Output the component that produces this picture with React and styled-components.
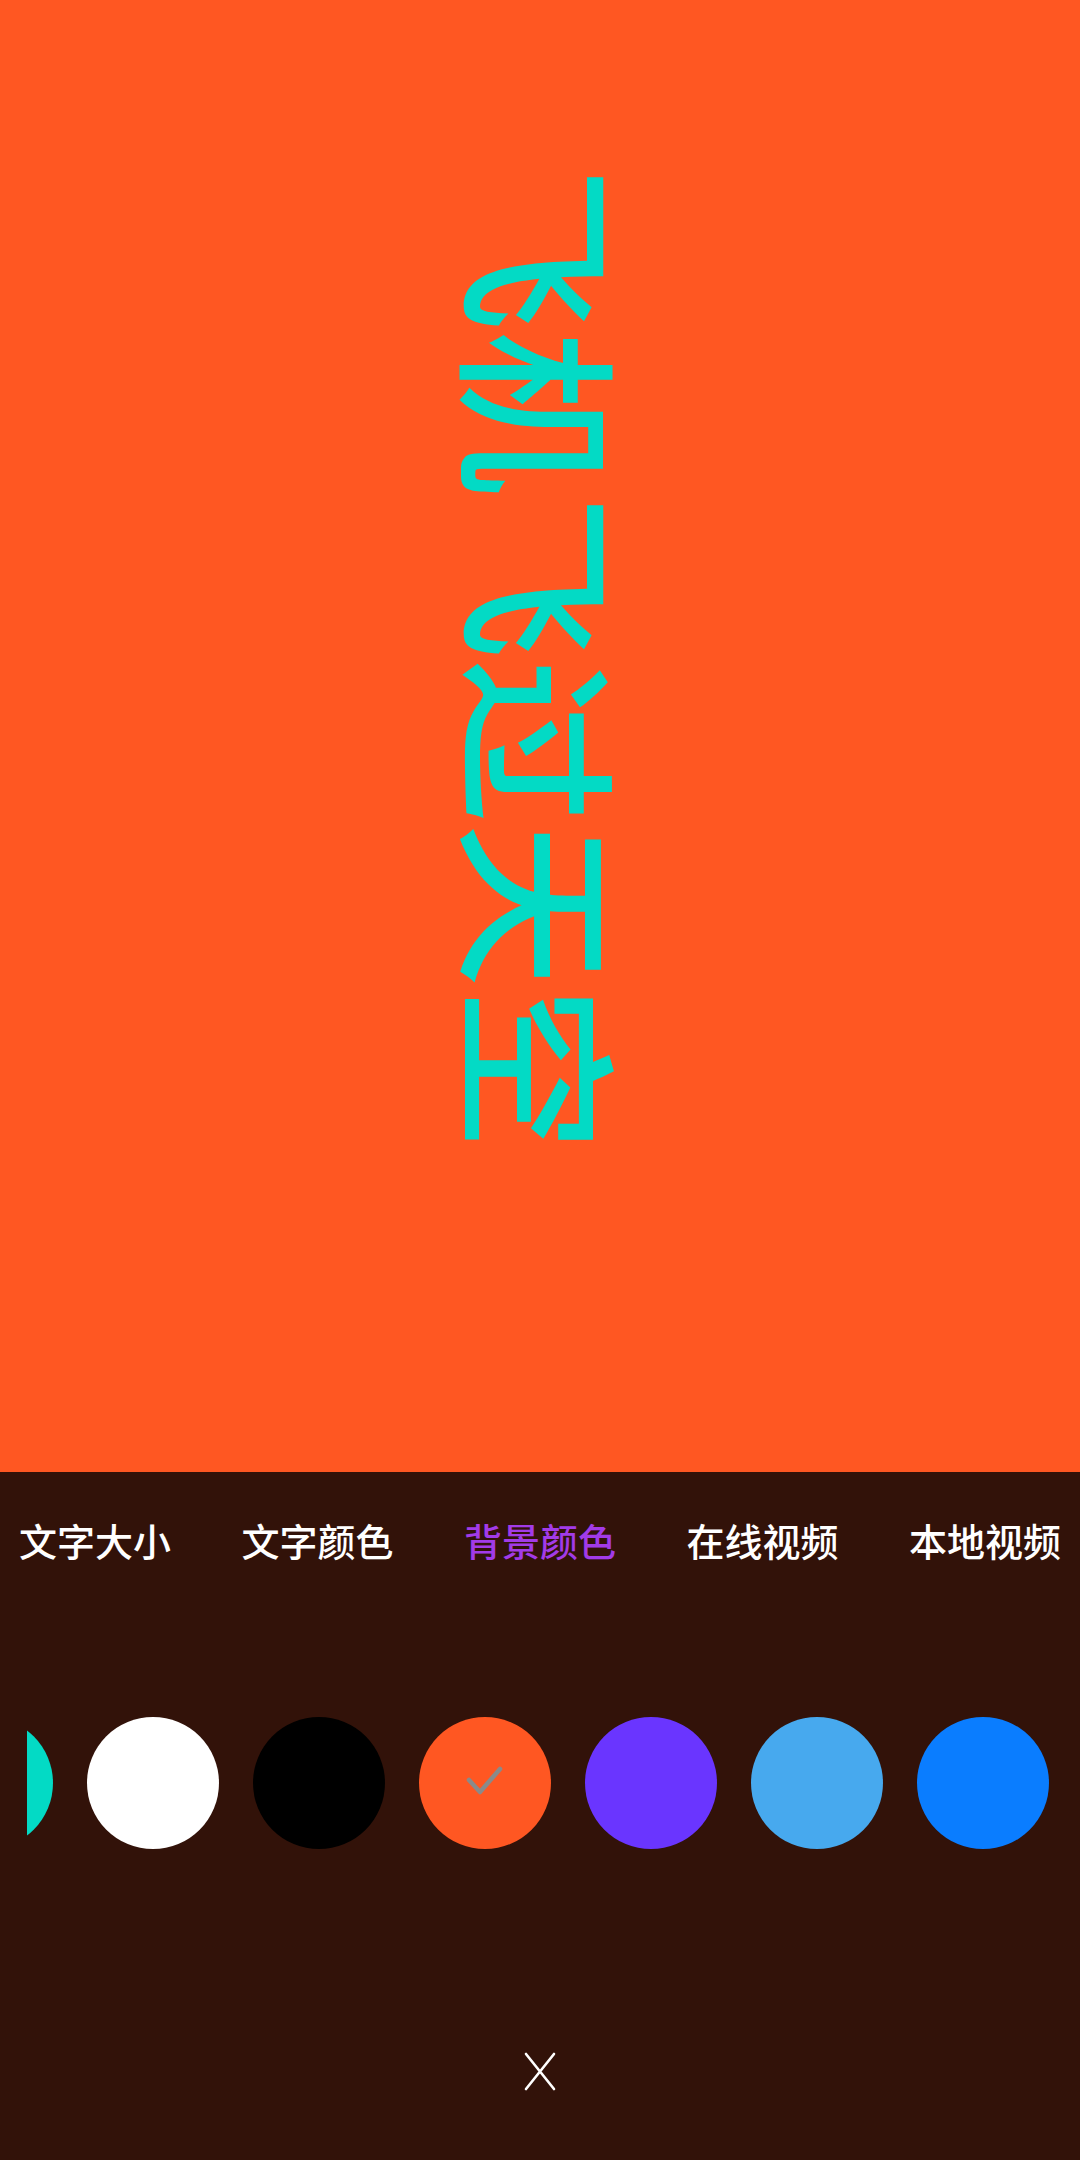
import React from "react";
import styled, { createGlobalStyle } from "styled-components";

const GlobalStyle = createGlobalStyle`
  html, body {
    margin: 0;
    padding: 0;
    background: #321209;
  }
  body {
    font-family: "Noto Sans CJK SC", "Noto Sans", sans-serif;
  }
`;

const tabs = ["文字大小", "文字颜色", "背景颜色", "在线视频", "本地视频"];
const swatches = ["#03dac5", "#ffffff", "#000000", "#ff5722", "#6a35ff", "#47a9ee", "#0a7dff"];

const Screen = styled.div`
  width: 1080px;
  height: 2160px;
  display: flex;
  flex-direction: column;
  overflow: hidden;
`;

const Stage = styled.div`
  height: 1472px;
  flex-shrink: 0;
  background: #ff5722;
  display: flex;
  justify-content: center;
  align-items: flex-start;
  padding: 167px 0 0 10px;
  box-sizing: border-box;
`;

const Marquee = styled.div`
  writing-mode: vertical-rl;
  text-orientation: sideways;
  color: #03dac5;
  font-size: 164px;
  font-weight: 500;
  line-height: 1;
  white-space: nowrap;
`;

const Panel = styled.div`
  flex: 1;
  background: #321209;
  display: flex;
  flex-direction: column;
`;

const TabBar = styled.div`
  height: 136px;
  padding: 0 19px;
  display: flex;
  align-items: center;
  justify-content: space-between;
`;

const Tab = styled.div`
  font-size: 38px;
  font-weight: 500;
  line-height: 1.2;
  color: ${p => (p.$active ? "#a23be8" : "#ffffff")};
`;

const SwatchViewport = styled.div`
  margin: 109px 27px 0;
  overflow: hidden;
`;

const SwatchTrack = styled.div`
  display: flex;
  gap: 34px;
  margin-left: -106px;
`;

const Swatch = styled.div`
  width: 132px;
  height: 132px;
  flex-shrink: 0;
  border-radius: 50%;
  background: ${p => p.$color};
  display: flex;
  align-items: center;
  justify-content: center;
`;

const CloseButton = styled.div`
  margin: 192px auto 0;
  width: 60px;
  height: 60px;
  display: flex;
  align-items: center;
  justify-content: center;
`;

const Check = () => (
  <svg width="40" height="34" viewBox="0 0 40 34" style={{ marginLeft: 2 }}>
    <path d="M3 14 L14 26 L34 3" fill="none" stroke="#8a8a8a" strokeWidth="4.5" strokeLinecap="round" strokeLinejoin="round" />
  </svg>
);

const CloseIcon = () => (
  <svg width="32" height="39" viewBox="0 0 32 39">
    <path d="M2 2 L30 37 M30 2 L2 37" fill="none" stroke="#ffffff" strokeWidth="2.6" strokeLinecap="round" />
  </svg>
);

export default function App() {
  return (
    <>
      <GlobalStyle />
      <Screen>
        <Stage>
          <Marquee>飞机飞过天空</Marquee>
        </Stage>
        <Panel>
          <TabBar>
            {tabs.map(t => (
              <Tab key={t} $active={t === "背景颜色"}>
                {t}
              </Tab>
            ))}
          </TabBar>
          <SwatchViewport>
            <SwatchTrack>
              {swatches.map((c, i) => (
                <Swatch key={i} $color={c}>
                  {i === 3 && <Check />}
                </Swatch>
              ))}
            </SwatchTrack>
          </SwatchViewport>
          <CloseButton>
            <CloseIcon />
          </CloseButton>
        </Panel>
      </Screen>
    </>
  );
}
